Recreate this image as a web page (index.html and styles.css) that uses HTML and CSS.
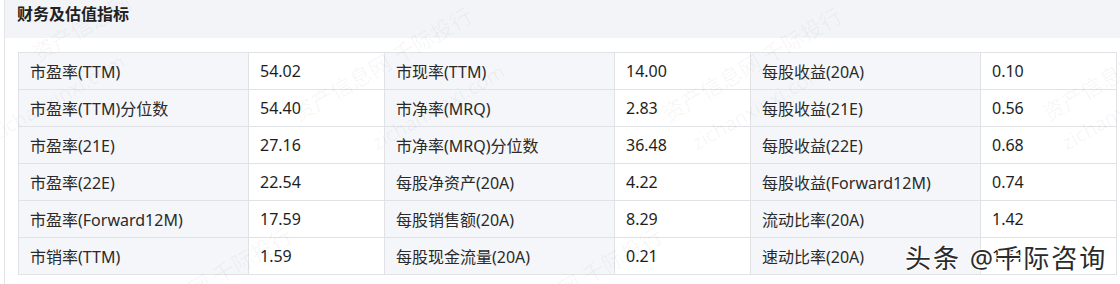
FILE: index.html
```html
<!DOCTYPE html>
<html lang="zh-CN">
<head>
    <meta charset="UTF-8">
    <meta name="viewport" content="width=device-width, initial-scale=1.0">
    <title>财务及估值指标</title>
    <link rel="stylesheet" href="styles.css">
</head>
<body>

<div class="panel">
    <div class="panel-head">财务及估值指标</div>

    <table class="metrics">
        <colgroup>
            <col class="c-label"><col class="c-value">
            <col class="c-label"><col class="c-value">
            <col class="c-label"><col class="c-value">
        </colgroup>
        <tr>
            <td class="label">市盈率(TTM)</td><td>54.02</td>
            <td class="label">市现率(TTM)</td><td>14.00</td>
            <td class="label">每股收益(20A)</td><td>0.10</td>
        </tr>
        <tr>
            <td class="label">市盈率(TTM)分位数</td><td>54.40</td>
            <td class="label">市净率(MRQ)</td><td>2.83</td>
            <td class="label">每股收益(21E)</td><td>0.56</td>
        </tr>
        <tr>
            <td class="label">市盈率(21E)</td><td>27.16</td>
            <td class="label">市净率(MRQ)分位数</td><td>36.48</td>
            <td class="label">每股收益(22E)</td><td>0.68</td>
        </tr>
        <tr>
            <td class="label">市盈率(22E)</td><td>22.54</td>
            <td class="label">每股净资产(20A)</td><td>4.22</td>
            <td class="label">每股收益(Forward12M)</td><td>0.74</td>
        </tr>
        <tr>
            <td class="label">市盈率(Forward12M)</td><td>17.59</td>
            <td class="label">每股销售额(20A)</td><td>8.29</td>
            <td class="label">流动比率(20A)</td><td>1.42</td>
        </tr>
        <tr>
            <td class="label">市销率(TTM)</td><td>1.59</td>
            <td class="label">每股现金流量(20A)</td><td>0.21</td>
            <td class="label">速动比率(20A)</td><td>1.61</td>
        </tr>
    </table>
</div>

<!-- faint site watermark over the page -->
<div class="wm-layer">
    <div class="wm" style="left:40px;top:40px">资产信息网 千际投行</div>
    <div class="wm small" style="left:0px;top:120px">zichanxinxi.com</div>
    <div class="wm" style="left:300px;top:100px">资产信息网 千际投行</div>
    <div class="wm small" style="left:380px;top:130px">zichanxinxi.com</div>
    <div class="wm" style="left:670px;top:100px">资产信息网 千际投行</div>
    <div class="wm small" style="left:700px;top:130px">zichanxinxi.com</div>
    <div class="wm" style="left:1050px;top:100px">资产信息网 千际投行</div>
    <div class="wm small" style="left:1070px;top:130px">zichanxinxi.com</div>
    <div class="wm" style="left:120px;top:320px">资产信息网 千际投行</div>
    <div class="wm" style="left:490px;top:320px">资产信息网 千际投行</div>
</div>

<div class="stamp">头条 @千际咨询</div>

</body>
</html>
```

FILE: styles.css
```css
body {
    margin: 0;
    background: #fff;
    font-family: "Noto Sans", "Noto Sans CJK SC", sans-serif;
    color: #222;
    overflow: hidden;
    position: relative;
    height: 284px;
}

.panel {
    margin-left: 4px;
    border-left: 1px solid #e3e4e8;
    height: 284px;
}

.panel-head {
    height: 38px;
    line-height: 28px;
    padding-left: 12px;
    background-color: #f3f4f8;
    font-size: 16px;
    font-weight: bold;
    color: #222;
}

.metrics {
    margin: 14px 0 0 13px;
    border-collapse: collapse;
    table-layout: fixed;
    width: 1098px;
    font-size: 16px;
}

.c-label {
    width: 230px;
}

.c-value {
    width: 136px;
}

.metrics td {
    height: 36px;
    padding: 0 0 0 11px;
    border: 1px solid #e1e2e6;
    white-space: nowrap;
    color: #1e1e1e;
}

.metrics td.label {
    background-color: #f5f6f9;
    color: #2a2a2a;
}

.wm-layer {
    position: absolute;
    left: 0;
    top: 0;
    right: 0;
    bottom: 0;
    overflow: hidden;
    pointer-events: none;
}

.wm {
    position: absolute;
    transform: rotate(-30deg);
    transform-origin: left bottom;
    font-size: 22px;
    line-height: 26px;
    color: rgba(0, 0, 0, 0.045);
    white-space: nowrap;
}

.wm.small {
    font-size: 20px;
}

.stamp {
    position: absolute;
    left: 905px;
    top: 239px;
    font-size: 26px;
    line-height: 38px;
    letter-spacing: 2px;
    color: #2b2b2b;
    white-space: nowrap;
    text-shadow: 1px 0 #fff, -1px 0 #fff, 0 1px #fff, 0 -1px #fff;
}
```
